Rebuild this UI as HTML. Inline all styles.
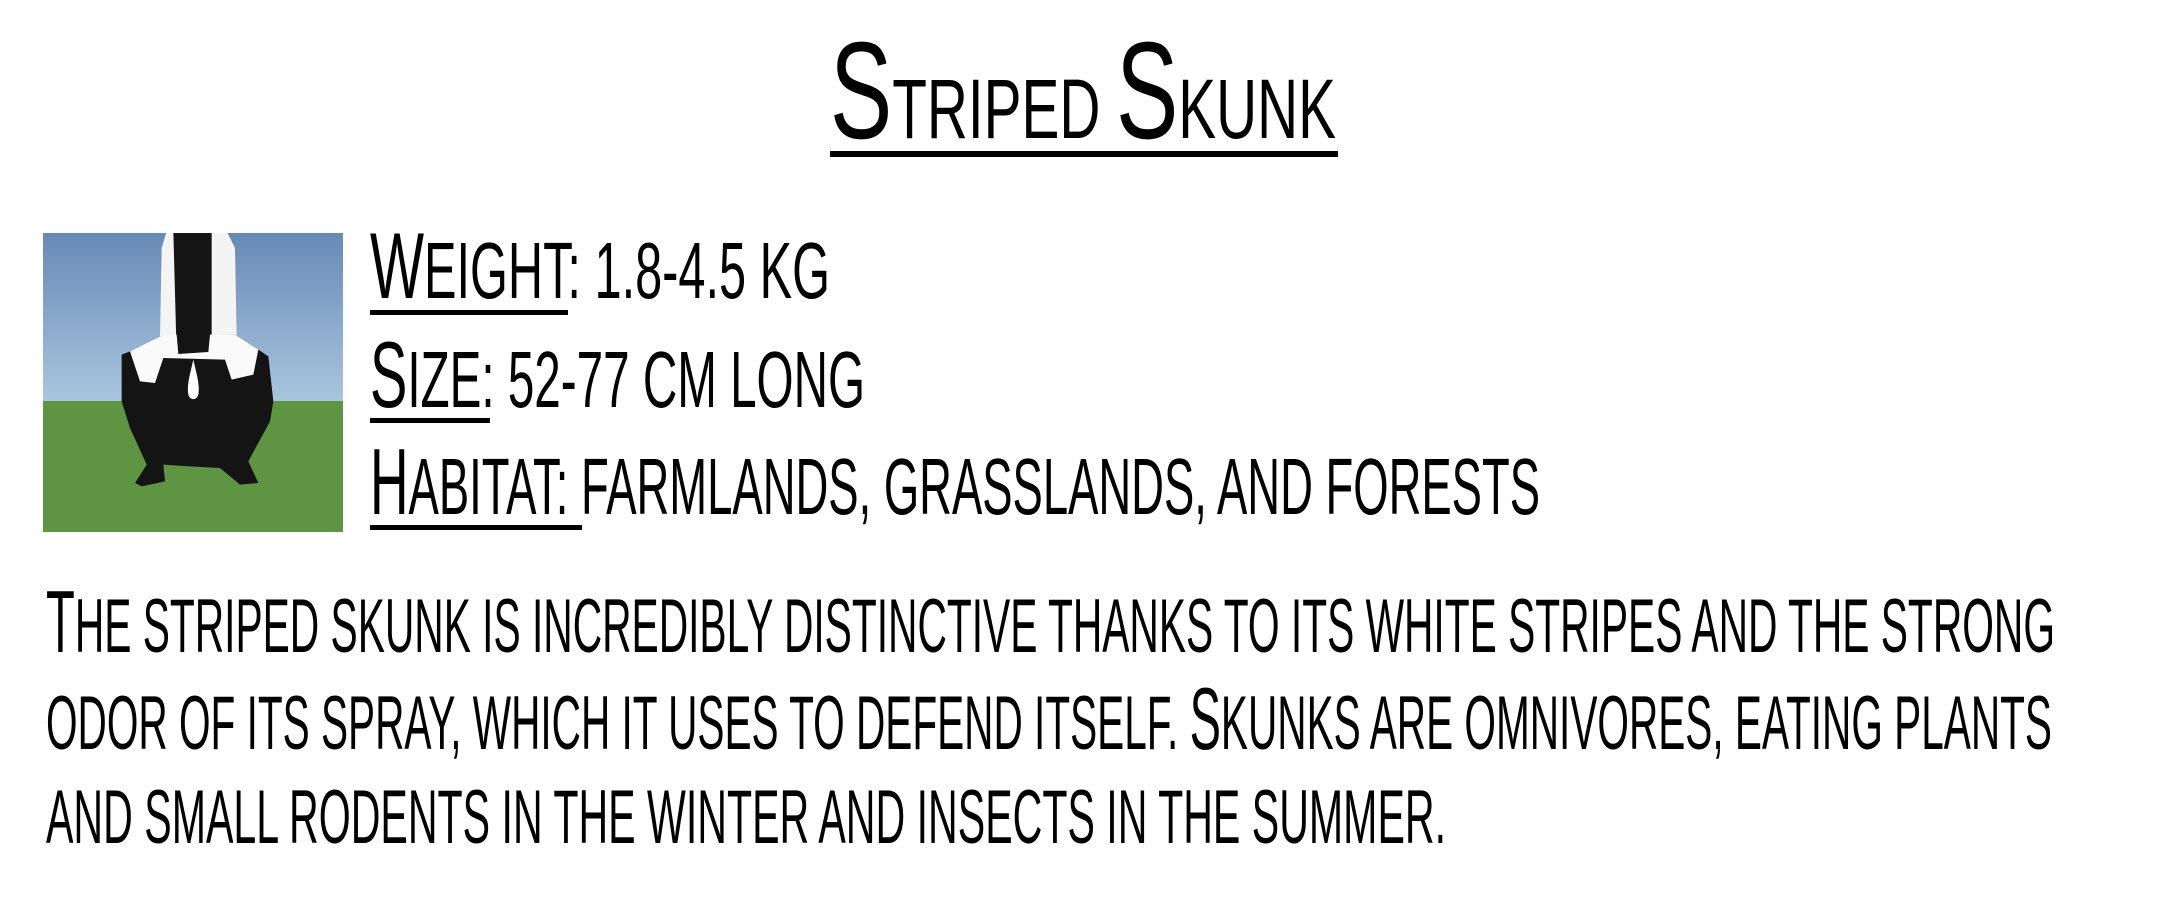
<!DOCTYPE html>
<html><head><meta charset="utf-8"><style>
html,body{margin:0;padding:0;background:#fff;width:2170px;height:905px;overflow:hidden}
svg{display:block}
text{font-family:"Liberation Sans Narrow","Liberation Sans",sans-serif;fill:#000}
</style></head><body>
<svg width="2170" height="905" viewBox="0 0 2170 905" xmlns="http://www.w3.org/2000/svg">
<defs>
<linearGradient id="sky" x1="0" y1="0" x2="0" y2="1">
<stop offset="0" stop-color="#6789b6"/><stop offset="1" stop-color="#a9c6df"/>
</linearGradient>
<clipPath id="ic"><rect x="43" y="233" width="300" height="299"/></clipPath>
</defs>
<!-- Title -->
<text x="830" y="138" textLength="506" lengthAdjust="spacingAndGlyphs" font-size="84"><tspan font-size="138">S</tspan>TRIPED <tspan font-size="138">S</tspan>KUNK</text>
<rect x="830" y="151" width="508" height="6"/>
<!-- image -->
<g clip-path="url(#ic)">
<rect x="43" y="233" width="300" height="169" fill="url(#sky)"/>
<rect x="43" y="401" width="300" height="131" fill="#5f9443"/>
<g transform="translate(40,228) scale(0.33333)">
<polygon points="380,10 560,10 585,60 590,330 360,330 365,60" fill="#f4f4f4"/>
<polygon points="400,10 515,10 515,380 410,380" fill="#141414"/>
<polygon points="245,380 270,370 360,325 585,320 655,365 685,385 700,520 690,580 625,700 655,765 600,770 540,720 450,715 370,710 375,760 305,775 285,765 320,710 270,600 245,520" fill="#141414"/>
<polygon points="270,370 360,325 410,320 415,378 505,372 510,320 585,320 655,365 640,440 575,455 555,395 370,390 345,465 300,460" fill="#fafafa"/>
<path d="M460,395 C450,440 440,470 445,500 C450,518 470,518 475,500 C480,470 470,440 460,395 Z" fill="#fff"/>
</g>
</g>
<!-- facts -->
<text x="370" y="298" textLength="460" lengthAdjust="spacingAndGlyphs" font-size="80"><tspan font-size="94">W</tspan>EIGHT: 1.8-4.5 KG</text>
<rect x="370" y="310" width="198" height="5"/>
<text x="370" y="407" textLength="495" lengthAdjust="spacingAndGlyphs" font-size="80"><tspan font-size="94">S</tspan>IZE: 52-77 CM LONG</text>
<rect x="370" y="418" width="120" height="5"/>
<text x="370" y="514" textLength="1170" lengthAdjust="spacingAndGlyphs" font-size="80"><tspan font-size="94">H</tspan>ABITAT: FARMLANDS, GRASSLANDS, AND FORESTS</text>
<rect x="370" y="525" width="212" height="5"/>
<!-- paragraph -->
<text x="46" y="652" textLength="2009" lengthAdjust="spacingAndGlyphs" font-size="76"><tspan font-size="88">T</tspan>HE STRIPED SKUNK IS INCREDIBLY DISTINCTIVE THANKS TO ITS WHITE STRIPES AND THE STRONG</text>
<text x="46" y="749" textLength="2006" lengthAdjust="spacingAndGlyphs" font-size="76">ODOR OF ITS SPRAY, WHICH IT USES TO DEFEND ITSELF. <tspan font-size="88">S</tspan>KUNKS ARE OMNIVORES, EATING PLANTS</text>
<text x="46" y="843" textLength="1400" lengthAdjust="spacingAndGlyphs" font-size="76">AND SMALL RODENTS IN THE WINTER AND INSECTS IN THE SUMMER.</text>
</svg>
</body></html>
